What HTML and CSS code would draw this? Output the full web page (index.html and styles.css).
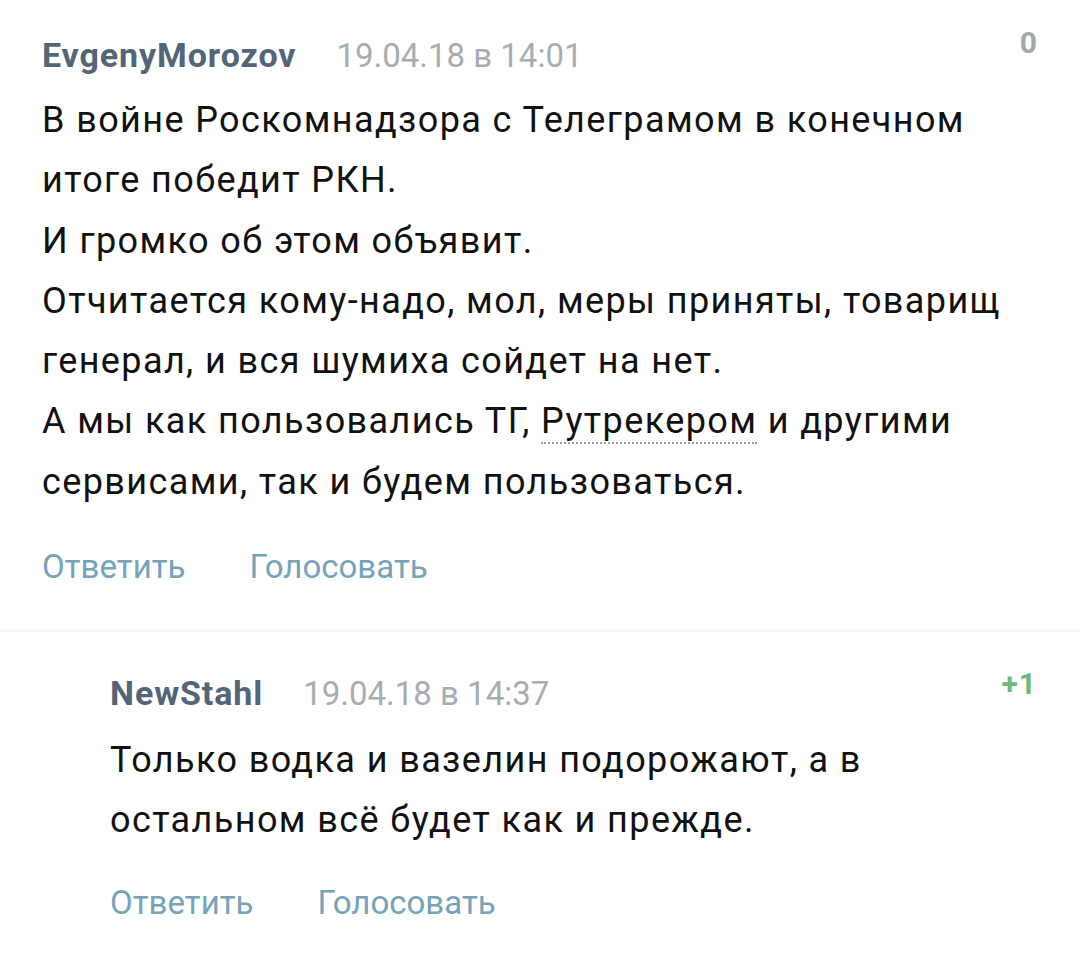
FILE: index.html
```html
<!DOCTYPE html>
<html lang="ru">
<head>
<meta charset="utf-8">
<link rel="stylesheet" href="styles.css">
</head>
<body>
<div class="thread">
  <div class="comment">
    <div class="head">
      <span class="user">EvgenyMorozov</span>
      <span class="date">19.04.18 в 14:01</span>
      <span class="score">0</span>
    </div>
    <div class="text">В войне Роскомнадзора с Телеграмом в конечном итоге победит РКН.<br>И громко об этом объявит.<br>Отчитается кому-надо, мол, меры приняты, товарищ генерал, и вся шумиха сойдет на нет.<br>А мы как пользовались ТГ, <span class="abbr">Рутрекером</span> и другими сервисами, так и будем пользоваться.</div>
    <div class="actions"><span class="act">Ответить</span><span class="act">Голосовать</span></div>
  </div>
  <div class="sep"></div>
  <div class="comment reply">
    <div class="head">
      <span class="user">NewStahl</span>
      <span class="date">19.04.18 в 14:37</span>
      <span class="score plus">+1</span>
    </div>
    <div class="text">Только водка и вазелин подорожают, а в остальном всё будет как и прежде.</div>
    <div class="actions"><span class="act">Ответить</span><span class="act">Голосовать</span></div>
  </div>
</div>
</body>
</html>
```
FILE: styles.css
```css
html, body {
  margin: 0;
  padding: 0;
  background: #fff;
}
body {
  font-family: Roboto, "Noto Sans", sans-serif;
  width: 1080px;
}
.thread {
  display: flex;
  flex-direction: column;
}
.comment {
  padding: 30px 42px 0 42px;
  display: flex;
  flex-direction: column;
}
.reply {
  padding-left: 110px;
  padding-top: 36px;
}
.head {
  display: flex;
  align-items: center;
  height: 50px;
}
.user {
  font-weight: 700;
  font-size: 34px;
  letter-spacing: 0.9px;
  color: #536577;
}
.date {
  font-size: 33px;
  color: #a8adb2;
  margin-left: 40px;
}
.score {
  margin-left: auto;
  font-size: 30px;
  font-weight: 700;
  color: #a4a8ad;
  align-self: flex-start;
  margin-top: -5px;
  margin-right: 1px;
}
.score.plus {
  color: #6dbb78;
  letter-spacing: 1px;
  margin-top: -2px;
}
.text {
  font-size: 36px;
  letter-spacing: 1.4px;
  line-height: 60.3px;
  color: #111;
  margin-top: 10px;
}
.reply .text {
  margin-top: 12px;
}
.abbr {
  border-bottom: 2px dotted #9a9a9a;
}
.actions {
  display: flex;
  gap: 64px;
  margin-top: 26px;
  height: 56px;
  align-items: center;
}
.reply .actions {
  margin-top: 24px;
}
.act {
  font-size: 33px;
  color: #76a3ba;
}
.sep {
  height: 3px;
  background: #f6f6f6;
  margin-top: 35px;
}
```
